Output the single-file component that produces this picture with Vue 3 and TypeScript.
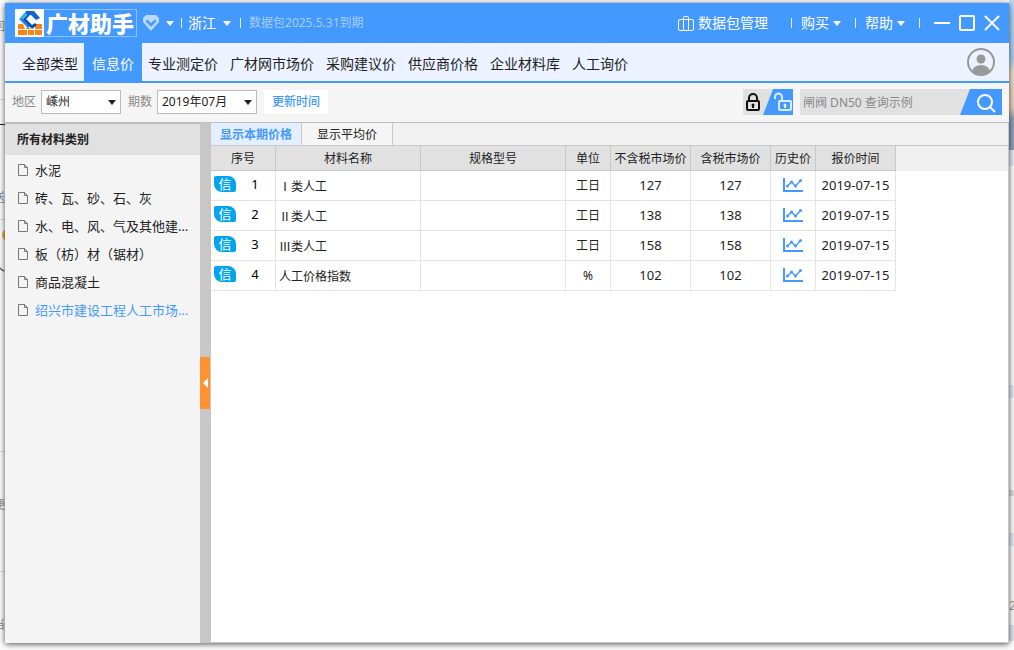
<script setup lang="ts">
import { ref } from 'vue'

interface PriceRow {
  id: number
  name: string
  spec: string
  unit: string
  net: number
  gross: number
  date: string
}

const navItems: string[] = ['全部类型', '信息价', '专业测定价', '广材网市场价', '采购建议价', '供应商价格', '企业材料库', '人工询价']
const activeNav = ref('信息价')

const categories: string[] = [
  '水泥',
  '砖、瓦、砂、石、灰',
  '水、电、风、气及其他建筑材料',
  '板（枋）材（锯材）',
  '商品混凝土',
  '绍兴市建设工程人工市场价格',
]
const activeCategory = ref(5)

const tabs: string[] = ['显示本期价格', '显示平均价']
const activeTab = ref(0)

const region = ref('嵊州')
const period = ref('2019年07月')
const keyword = ref('')

const rows: PriceRow[] = [
  { id: 1, name: 'Ⅰ类人工', spec: '', unit: '工日', net: 127, gross: 127, date: '2019-07-15' },
  { id: 2, name: 'Ⅱ类人工', spec: '', unit: '工日', net: 138, gross: 138, date: '2019-07-15' },
  { id: 3, name: 'Ⅲ类人工', spec: '', unit: '工日', net: 158, gross: 158, date: '2019-07-15' },
  { id: 4, name: '人工价格指数', spec: '', unit: '%', net: 102, gross: 102, date: '2019-07-15' },
]
</script>

<template>
  <div class="desktop">
    <div class="backdrop" aria-hidden="true">
      <div class="strip left">
        <i class="rule r1"></i><i class="rule r2"></i><i class="rule r3"></i><i class="rule r4"></i><i class="rule r5"></i>
        <span class="frag f1">回</span>
        <span class="frag f2">送</span>
        <span class="frag f3">个</span>
        <span class="frag f4">便</span>
        <span class="frag f5">当</span>
        <i class="dot"></i>
      </div>
      <div class="strip right">
        <span class="frag f6">20</span>
      </div>
    </div>

    <div class="window">
      <header class="titlebar">
        <div class="brand">
          <svg class="logo" viewBox="0 0 29 28" width="29" height="28">
            <rect width="29" height="28" fill="#fff" />
            <path d="M3 15h5l2 5H3zM20 15h7v5h-7zM9 20h10v0H9zM3 21h9v5H3zM13 21h6v5h-6zM20 21h7v5h-7zM11 19l2-1 3 2h-5z" fill="#ff8214" />
            <path d="M4 10L11 2h4l-7 8z" fill="#27b4f4" />
            <path d="M11 2h8l6 7-4 2-5-5-3 1-2-2z" fill="#1263cf" />
            <path d="M4 10h5l7 7-3 2z" fill="#1787ee" />
            <path d="M8 10l5-5 1 2-3 3 6 6 3-2 2 2-5 4z" fill="#0a4fb0" />
          </svg>
          <span class="brand-name">广材助手</span>
        </div>
        <button class="bare level" aria-label="会员">
          <svg viewBox="0 0 16 16" width="16" height="16">
            <path d="M3 0h10l3 3v4l-8 9-8-9V3z" fill="#b9d9ff" />
            <path d="M3.500 5.500L8 10l4.500-4.500" fill="none" stroke="#4499ff" stroke-width="2.500" />
          </svg>
          <svg class="caret" viewBox="0 0 8 5" width="8" height="5"><path d="M0 0h8L4 5z" fill="#fff" /></svg>
        </button>
        <i class="sep"></i>
        <button class="bare province">浙江
          <svg class="caret" viewBox="0 0 8 5" width="8" height="5"><path d="M0 0h8L4 5z" fill="#fff" /></svg>
        </button>
        <i class="sep"></i>
        <span class="expiry">数据包2025.5.31到期</span>

        <div class="title-right">
          <button class="bare package">
            <svg viewBox="0 0 16 15" width="16" height="15" fill="none" stroke="#fff">
              <rect x="0.500" y="3.500" width="15" height="11" rx="1.500" />
              <path d="M5.500 14.500V1.500a1 1 0 0 1 1-1h3a1 1 0 0 1 1 1v13" />
            </svg>
            数据包管理
          </button>
          <i class="sep"></i>
          <button class="bare menu">购买
            <svg viewBox="0 0 8 5" width="8" height="5"><path d="M0 0h8L4 5z" fill="#fff" /></svg>
          </button>
          <i class="sep"></i>
          <button class="bare menu">帮助
            <svg viewBox="0 0 8 5" width="8" height="5"><path d="M0 0h8L4 5z" fill="#fff" /></svg>
          </button>
          <i class="sep"></i>
          <div class="controls">
            <button class="bare" aria-label="最小化">
              <svg viewBox="0 0 16 16" width="16" height="16"><path d="M0 8h16" stroke="#fff" stroke-width="2" /></svg>
            </button>
            <button class="bare" aria-label="最大化">
              <svg viewBox="0 0 16 16" width="16" height="16"><rect x="1" y="1" width="14" height="14" rx="1" fill="none" stroke="#fff" stroke-width="2" /></svg>
            </button>
            <button class="bare" aria-label="关闭">
              <svg viewBox="0 0 16 16" width="16" height="16"><path d="M1 1l14 14M15 1L1 15" stroke="#fff" stroke-width="2" /></svg>
            </button>
          </div>
        </div>
      </header>

      <nav class="nav">
        <button
          v-for="item in navItems"
          :key="item"
          class="bare nav-item"
          :class="{ active: item === activeNav }"
          @click="activeNav = item"
        >{{ item }}</button>
        <button class="bare avatar" aria-label="用户">
          <svg viewBox="0 0 28 28" width="28" height="28">
            <defs><clipPath id="face"><circle cx="14" cy="14" r="13" /></clipPath></defs>
            <circle cx="14" cy="14" r="13" fill="#ecf2ff" stroke="#999" stroke-width="2" />
            <circle cx="14" cy="11" r="4.500" fill="#999" />
            <ellipse cx="14" cy="24" rx="9" ry="7" fill="#999" clip-path="url(#face)" />
          </svg>
        </button>
      </nav>

      <div class="toolbar">
        <label for="region">地区</label>
        <div class="select region">
          <select id="region" v-model="region"><option>嵊州</option></select>
          <svg viewBox="0 0 8 5" width="8" height="5"><path d="M0 0h8L4 5z" fill="#222" /></svg>
        </div>
        <label for="period">期数</label>
        <div class="select period">
          <select id="period" v-model="period"><option>2019年07月</option></select>
          <svg viewBox="0 0 8 5" width="8" height="5"><path d="M0 0h8L4 5z" fill="#222" /></svg>
        </div>
        <button class="bare update">更新时间</button>

        <button class="bare lock" aria-label="锁定">
          <svg viewBox="0 0 50 26" width="50" height="26">
            <rect width="50" height="26" fill="#e1e1e1" />
            <path d="M30 0h20v26H20z" fill="#4499ff" />
            <g fill="none" stroke="#111" stroke-width="2">
              <rect x="4" y="12" width="12" height="9" rx="1" />
              <path d="M6 12V9a4 4 0 0 1 8 0v3" />
              <path d="M10 15v4" />
            </g>
            <circle cx="10" cy="16" r="1.500" fill="#111" />
            <g fill="none" stroke="#dcecff" stroke-width="2">
              <rect x="36" y="12" width="12" height="9" rx="1" />
              <path d="M39 12V8a3.500 3.500 0 0 0-7 0v2" />
              <path d="M42 15v4" />
            </g>
            <circle cx="42" cy="16" r="1.500" fill="#dcecff" />
          </svg>
        </button>
        <form class="search" @submit.prevent>
          <input v-model="keyword" type="text" aria-label="查询" placeholder="闸阀 DN50 查询示例" />
          <button class="bare" aria-label="搜索">
            <svg viewBox="0 0 42 26" width="42" height="26">
              <path d="M10 0h32v26H0z" fill="#4499ff" />
              <circle cx="25" cy="13" r="7" fill="none" stroke="#fff" stroke-width="2" />
              <path d="M30 18l5 5" stroke="#fff" stroke-width="2" />
            </svg>
          </button>
        </form>
      </div>

      <div class="body">
        <aside class="sidebar">
          <h2>所有材料类别</h2>
          <ul>
            <li v-for="(cat, i) in categories" :key="cat">
              <button class="bare category" :class="{ active: i === activeCategory }" @click="activeCategory = i">
                <svg viewBox="0 0 10 12" width="10" height="12" fill="none" stroke="#777">
                  <path d="M0.500 0.500h6l3 3v8h-9z" />
                  <path d="M6.500 0.500v3h3" />
                </svg>
                <span>{{ cat }}</span>
              </button>
            </li>
          </ul>
        </aside>

        <div class="splitter">
          <button class="bare handle" aria-label="收起">
            <svg viewBox="0 0 5 10" width="5" height="10"><path d="M5 0v10L0 5z" fill="#fff" /></svg>
          </button>
        </div>

        <main class="content">
          <div class="tabs">
            <button
              v-for="(tab, i) in tabs"
              :key="tab"
              class="bare tab"
              :class="{ active: i === activeTab }"
              @click="activeTab = i"
            >{{ tab }}</button>
          </div>
          <table>
            <colgroup>
              <col class="c-no" /><col class="c-wide" /><col class="c-wide" /><col class="c-small" />
              <col class="c-mid" /><col class="c-mid" /><col class="c-small" /><col class="c-mid" /><col />
            </colgroup>
            <thead>
              <tr>
                <th>序号</th><th>材料名称</th><th>规格型号</th><th>单位</th>
                <th>不含税市场价</th><th>含税市场价</th><th>历史价</th><th>报价时间</th><td class="rest"></td>
              </tr>
            </thead>
            <tbody>
              <tr v-for="row in rows" :key="row.id">
                <td>
                  <div class="number">
                    <span class="badge">信</span>
                    <span class="index">{{ row.id }}</span>
                  </div>
                </td>
                <td class="name">{{ row.name }}</td>
                <td>{{ row.spec }}</td>
                <td>{{ row.unit }}</td>
                <td class="num">{{ row.net }}</td>
                <td class="num">{{ row.gross }}</td>
                <td class="num">
                  <button class="bare history" aria-label="历史价">
                    <svg viewBox="0 0 20 14" width="20" height="14" fill="none" stroke="#4499ff">
                      <path d="M1 0v13h19" stroke-width="2" />
                      <path d="M4.500 8l4-4 4 4 5-5.500" stroke-width="1.500" />
                      <g fill="#4499ff" stroke="none">
                        <circle cx="4.500" cy="8" r="1.500" /><circle cx="8.500" cy="4" r="1.500" />
                        <circle cx="12.500" cy="8" r="1.500" /><circle cx="17.500" cy="2.500" r="1.500" />
                      </g>
                    </svg>
                  </button>
                </td>
                <td class="num">{{ row.date }}</td>
                <td class="rest"></td>
              </tr>
            </tbody>
          </table>
        </main>
      </div>
    </div>
  </div>
</template>

<style>
body {
  margin: 0;
}
</style>

<style scoped>
* {
  box-sizing: border-box;
}
.desktop {
  position: relative;
  display: flex;
  min-height: 100vh;
  padding: 3px 5px 7px;
  overflow: hidden;
  background: #fdfdfd;
  color: #222;
  font: 12px/16px "Noto Sans", "Noto Sans CJK SC", sans-serif;
}
.backdrop {
  position: absolute;
  inset: 0;
}
.strip {
  position: absolute;
  top: 0;
  bottom: 0;
  width: 5px;
  overflow: hidden;
}
.left {
  left: 0;
}
.right {
  right: 0;
  background: linear-gradient(
    #bcd6f4 0, #a9caf0 58px, #ece0c4 74px, #e6cdbb 108px, #8fa0ba 119px, #8fa0ba 150px,
    #e4e9f0 150px, #e4e9f0 166px, #fdfdfd 166px, #fdfdfd 385px, #e4e9f0 385px, #e4e9f0 398px,
    #fdfdfd 398px, #fdfdfd 490px, #ddd 490px, #ddd 496px, #fdfdfd 496px, #fdfdfd 533px,
    #e4e9f0 533px, #e4e9f0 546px, #fdfdfd 546px, #fdfdfd 625px, #dfe5ec 625px, #dfe5ec 641px, #fdfdfd 641px
  );
}
.rule {
  position: absolute;
  left: 0;
  width: 5px;
  height: 1px;
  background: #ddd;
}
.r1 { top: 99px; }
.r2 { top: 124px; background: #222; }
.r3 { top: 219px; }
.r4 { top: 451px; }
.r5 { top: 571px; }
.frag {
  position: absolute;
  right: 0;
  color: #999;
}
.f1 { top: 19px; }
.f2 { top: 190px; color: #8b93aa; }
.f3 { top: 265px; color: #222; }
.f4 { top: 497px; }
.f5 { top: 617px; }
.f6 { top: 598px; right: -9px; }
.dot {
  position: absolute;
  top: 229px;
  left: 2px;
  width: 12px;
  height: 12px;
  border-radius: 6px;
  background: #e8b04a;
}
.window {
  position: relative;
  display: flex;
  flex: 1;
  flex-direction: column;
  min-width: 0;
  background: #f5f5f5;
  box-shadow: 0 1px 6px rgba(0, 0, 0, 0.7);
}
.bare {
  display: flex;
  align-items: center;
  margin: 0;
  padding: 0;
  border: 0;
  background: none;
  color: inherit;
  font: inherit;
  white-space: nowrap;
  cursor: pointer;
}
svg {
  display: block;
  flex: none;
}

.titlebar {
  display: flex;
  align-items: center;
  height: 40px;
  padding: 0 9px 0 10px;
  background: #4499ff;
  color: #fff;
  font-size: 14px;
}
.brand {
  display: flex;
  align-items: center;
  height: 28px;
  border: 1px solid #8fc2ff;
  border-left: 0;
}
.brand-name {
  padding: 0 2px 2px;
  font: 900 22px/24px "Noto Sans CJK SC", sans-serif;
}
.level {
  gap: 7px;
  margin: 0 7px 0 6px;
}
.sep {
  width: 1px;
  height: 10px;
  background: #e3f0ff;
}
.province {
  gap: 7px;
  margin: 0 9px 0 6px;
}
.expiry {
  margin-left: 8px;
  color: #a5cfff;
  font-size: 12px;
}
.title-right {
  display: flex;
  align-items: center;
  margin-left: auto;
}
.package {
  gap: 4px;
  margin-right: 23px;
}
.menu {
  gap: 4px;
  margin: 0 14px 0 9px;
}
.controls {
  display: flex;
  gap: 9px;
  margin-left: 14px;
}

.nav {
  display: flex;
  height: 40px;
  padding-left: 11px;
  border-bottom: 2px solid #4499ff;
  background: #ecf2ff;
  font-size: 14px;
}
.nav-item {
  padding: 3px 6px 0;
}
.nav-item.active {
  padding: 3px 8px 0;
  background: #4499ff;
  color: #fff;
}
.avatar {
  margin: 0 14px 0 auto;
}

.toolbar {
  display: flex;
  align-items: center;
  height: 40px;
  padding: 0 7px 1px;
  border-bottom: 1px solid #bdbdbd;
}
.toolbar label {
  width: 29px;
  color: #888;
}
.select {
  display: grid;
  align-items: center;
  margin-right: 7px;
}
.select > * {
  grid-area: 1 / 1;
}
.select svg {
  margin-right: 5px;
  justify-self: end;
  pointer-events: none;
}
.region {
  width: 80px;
}
.period {
  width: 100px;
}
.select select {
  width: 100%;
  height: 24px;
  padding: 0 4px;
  border: 1px solid #bbb;
  border-radius: 0;
  background: #fff;
  color: #222;
  font: inherit;
  appearance: none;
}
.update {
  height: 24px;
  padding: 0 8px;
  background: #fff;
  color: #4499ff;
  font-weight: 500;
}
.lock {
  margin-left: auto;
}
.search {
  display: flex;
  width: 202px;
  margin-left: 7px;
  background: #e1e1e1;
}
.search input {
  flex: 1;
  min-width: 0;
  height: 26px;
  padding: 0 3px;
  border: 0;
  background: none;
  color: #222;
  font: inherit;
}
.search input::placeholder {
  color: #888;
  opacity: 1;
}

.body {
  display: flex;
  flex: 1;
}
.sidebar {
  width: 195px;
  border-top: 1px solid #bdbdbd;
  background: #f4f4f4;
}
.sidebar h2 {
  margin: 0;
  padding: 0 12px;
  background: #e1e1e1;
  font-size: 12px;
  font-weight: 700;
  line-height: 31px;
}
.sidebar ul {
  margin: 0;
  padding: 1px 0 0;
  list-style: none;
}
.category {
  width: 100%;
  height: 28px;
  gap: 7px;
  padding: 0 10px 0 13px;
  font-size: 13px;
}
.category span {
  overflow: hidden;
  text-overflow: ellipsis;
}
.category.active {
  color: #4499ff;
}
.splitter {
  display: flex;
  align-items: center;
  width: 11px;
  background: #c8c7c5;
}
.handle {
  justify-content: center;
  width: 10px;
  height: 52px;
  background: #ff9233;
}
.content {
  flex: 1;
  min-width: 0;
  border: solid #c8c8c8;
  border-width: 0 1px 1px 0;
  background: #fff;
}
.tabs {
  display: flex;
  height: 23px;
  border-bottom: 1px solid #c8c8c8;
  background: #f1f1f1;
}
.tab {
  justify-content: center;
  width: 91px;
  padding-top: 2px;
  border-right: 1px solid #c8c8c8;
  background: #f5f5f5;
}
.tab.active {
  background: #e3efff;
  color: #4499ff;
  font-weight: 700;
}
table {
  width: 100%;
  border-spacing: 0;
  table-layout: fixed;
}
.c-no { width: 65px; }
.c-wide { width: 145px; }
.c-small { width: 45px; }
.c-mid { width: 80px; }
th,
td {
  padding: 0;
  text-align: center;
  white-space: nowrap;
}
th {
  height: 25px;
  padding-top: 2px;
  border: solid #c8c8c8;
  border-width: 0 1px 1px 0;
  background: #e1e1e1;
  font-weight: 400;
}
td {
  height: 30px;
  border: solid #e3e3e3;
  border-width: 0 1px 1px 0;
}
td.rest {
  border: 0;
}
thead td.rest {
  height: 25px;
  background: #f0f0f0;
}
td.name {
  padding-left: 3px;
  font-family: "Noto Sans CJK SC", sans-serif;
  text-align: left;
}
.num {
  padding-bottom: 2px;
  font-size: 13px;
}
.number {
  display: flex;
  align-items: center;
  padding: 0 0 3px 3px;
}
.badge {
  width: 22px;
  border-radius: 2px 8px 2px 8px;
  background: #00a4ef;
  color: #fff;
  font-size: 13px;
}
.index {
  width: 38px;
  color: #000;
  font-size: 13px;
}
.history {
  margin: 0 auto;
}
</style>
